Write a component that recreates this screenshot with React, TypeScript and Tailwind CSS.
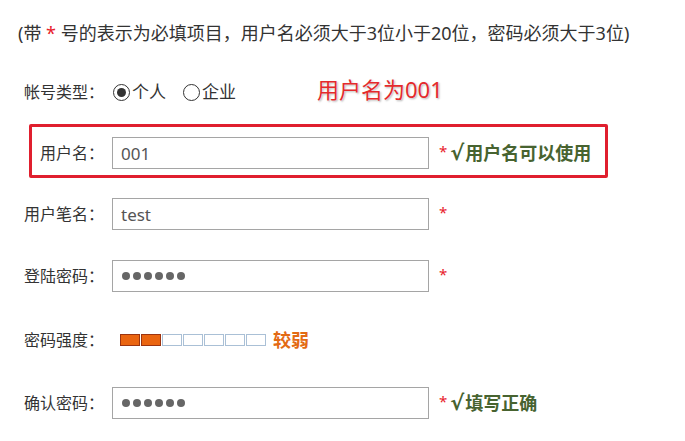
import React from 'react';

const FONT = { fontFamily: '"Noto Sans", "Noto Sans CJK SC", sans-serif' };

const Label: React.FC<{ text: string }> = ({ text }) => (
  <span className="w-[86px] shrink-0 text-right text-[16px] text-[#333]">{text}</span>
);

const Star: React.FC = () => (
  <span className="ml-[10px] text-[15px] leading-none text-[#e8202a] -mt-[4px]">*</span>
);

const Field: React.FC<{ value: string }> = ({ value }) => (
  <input
    readOnly
    value={value}
    className="ml-[8px] h-[32px] w-[317px] border border-[#a5a5a5] bg-white px-[8px] text-[17px] text-[#555] outline-none"
    style={FONT}
  />
);

const Secret: React.FC = () => (
  <div className="ml-[8px] flex h-[32px] w-[317px] items-center gap-[3px] border border-[#a5a5a5] bg-white px-[9px]">
    {[0, 1, 2, 3, 4, 5].map((i) => (
      <span key={i} className="h-[8px] w-[8px] rounded-full bg-[#666]" />
    ))}
  </div>
);

const Ok: React.FC<{ text: string }> = ({ text }) => (
  <span className="ml-[3px] flex items-center text-[18px] font-bold text-[#476330]">
    <span className="mr-[1px] font-['DejaVu_Sans',sans-serif] text-[21px] leading-none">√</span>
    {text}
  </span>
);

const Radio: React.FC<{ checked?: boolean }> = ({ checked }) => (
  <span className="flex h-[17px] w-[17px] items-center justify-center rounded-full border-[1.5px] border-[#333] bg-white">
    {checked && <span className="h-[9px] w-[9px] rounded-full bg-[#333]" />}
  </span>
);

export default function App() {
  const cells = [true, true, false, false, false, false, false];
  return (
    <div className="h-[441px] w-[685px] bg-white pt-[22px]" style={FONT}>
      <p className="pl-[18px] text-[18px] leading-[22px] text-[#333]">
        (带 <span className="text-[#e8202a]">*</span> 号的表示为必填项目，用户名必须大于3位小于20位，密码必须大于3位)
      </p>

      <div className="mt-[32px] flex h-[32px] items-center pl-[18px]">
        <Label text="帐号类型：" />
        <span className="ml-[9px] flex items-center gap-[2px] text-[17px] text-[#333]">
          <Radio checked />
          个人
        </span>
        <span className="ml-[17px] flex items-center gap-[2px] text-[17px] text-[#333]">
          <Radio />
          企业
        </span>
        <span className="-mt-[6px] ml-[81px] text-[22px] text-[#e42a2c] [text-shadow:0_0_2px_#fff,1px_1px_2px_rgba(0,0,0,0.35)]">
          用户名为001
        </span>
      </div>

      <div className="relative mt-[29px] flex h-[32px] items-center pl-[18px]">
        <div className="pointer-events-none absolute -top-[13px] -bottom-[9px] left-[29px] w-[579px] rounded-[2px] border-[3px] border-[#e01f2e]" />
        <Label text="用户名：" />
        <Field value="001" />
        <Star />
        <Ok text="用户名可以使用" />
      </div>

      <div className="mt-[29px] flex h-[32px] items-center pl-[18px]">
        <Label text="用户笔名：" />
        <Field value="test" />
        <Star />
      </div>

      <div className="mt-[30px] flex h-[32px] items-center pl-[18px]">
        <Label text="登陆密码：" />
        <Secret />
        <Star />
      </div>

      <div className="mt-[32px] flex h-[32px] items-center pl-[18px]">
        <Label text="密码强度：" />
        <div className="ml-[16px] flex gap-[1px]">
          {cells.map((on, i) => (
            <span
              key={i}
              className={
                on
                  ? 'h-[12px] w-[20px] border border-[#9c3410] bg-[#ea6510]'
                  : 'h-[12px] w-[20px] border border-[#aac0d6] bg-white'
              }
            />
          ))}
        </div>
        <span className="ml-[7px] text-[18px] font-bold text-[#e36a14]">较弱</span>
      </div>

      <div className="mt-[31px] flex h-[32px] items-center pl-[18px]">
        <Label text="确认密码：" />
        <Secret />
        <Star />
        <Ok text="填写正确" />
      </div>
    </div>
  );
}
